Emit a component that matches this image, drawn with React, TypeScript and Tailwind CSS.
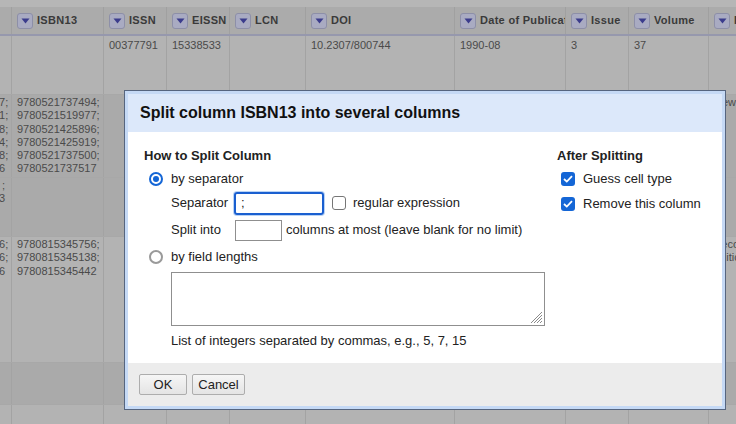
const cols = [73, 92, 63, 63, 76, 149, 111, 63, 80, 120];
const headers = ["ISBN", "ISBN13", "ISSN", "EISSN", "LCN", "DOI", "Date of Publication", "Issue", "Volume", "Publisher"];

interface Row {
  h: number;
  dark: boolean;
  pt: number;
  cells: string[][];
}

const rows: Row[] = [
  { h: 59, dark: false, pt: 3, cells: [[], [], ["00377791"], ["15338533"], [], ["10.2307/800744"], ["1990-08"], ["3"], ["37"], []] },
  {
    h: 83,
    dark: true,
    pt: 1,
    cells: [
      ["0521737497;", "0521519971;", "0521425898;", "0521425914;", "0521737508;", "0521737516"],
      ["9780521737494;", "9780521519977;", "9780521425896;", "9780521425919;", "9780521737500;", "9780521737517"],
      [], [], [], [], [], [], [],
      ["New York"],
    ],
  },
  { h: 59, dark: true, pt: 1, cells: [["052173749 ;", "0521737503"]] },
  {
    h: 126,
    dark: false,
    pt: 1,
    cells: [
      ["0815345756;", "0815345136;", "0815345446"],
      ["9780815345756;", "9780815345138;", "9780815345442"],
      [], [], [], [], [], [], [],
      ["Second", "edition"],
    ],
  },
  { h: 42, dark: true, pt: 1, cells: [] },
  { h: 40, dark: false, pt: 1, cells: [] },
];

function DropBtn() {
  return (
    <span className="flex h-[16px] w-[16px] shrink-0 items-center justify-center rounded-[3px] border border-[#8d8fa8] bg-[#a9abc2]">
      <svg width="9" height="6" viewBox="0 0 9 6">
        <path d="M0.5 0.5 L8.5 0.5 L4.5 5.5 Z" fill="#3b3c8c" />
      </svg>
    </span>
  );
}

function Radio({ checked }: { checked: boolean }) {
  return checked ? (
    <span className="flex h-[14px] w-[14px] items-center justify-center rounded-full border-2 border-[#1466d6] bg-white">
      <span className="h-[6px] w-[6px] rounded-full bg-[#1466d6]" />
    </span>
  ) : (
    <span className="block h-[14px] w-[14px] rounded-full border-2 border-[#9a9a9a] bg-white" />
  );
}

function Check({ checked }: { checked: boolean }) {
  return checked ? (
    <span className="flex h-[14px] w-[14px] items-center justify-center rounded-[3px] bg-[#1466d6]">
      <svg width="10" height="8" viewBox="0 0 10 8">
        <path d="M1 4 L3.8 6.6 L9 1.2" stroke="white" strokeWidth="1.8" fill="none" />
      </svg>
    </span>
  ) : (
    <span className="block h-[14px] w-[14px] rounded-[3px] border-[1.5px] border-[#767676] bg-white" />
  );
}

export default function App() {
  return (
    <div
      className="relative h-[424px] w-[736px] overflow-hidden bg-[#b3b3b3]"
      style={{ fontFamily: '"Liberation Sans", Arial, sans-serif' }}
    >
      {/* grid behind the modal */}
      <div className="ml-[-61px] flex flex-col">
        <div className="h-[7px] bg-[#b6b6b6]" />
        <div className="flex h-[29px] border-b-2 border-[#9698ad] bg-[#ababab]">
          {headers.map((h, i) => (
            <div
              key={i}
              className="flex shrink-0 items-center gap-[4px] overflow-hidden border-r border-[#a0a0a0] pl-[5px] pr-[2px]"
              style={{ width: cols[i] }}
            >
              <DropBtn />
              <span className="whitespace-nowrap text-[11px] font-bold tracking-[0.3px] text-[#3a3a3a]">{h}</span>
            </div>
          ))}
        </div>
        {rows.map((r, ri) => (
          <div
            key={ri}
            className={`flex border-b border-[#a8a8a8] ${r.dark ? "bg-[#aaaaaa]" : "bg-[#b3b3b3]"}`}
            style={{ height: r.h }}
          >
            {cols.map((w, ci) => (
              <div
                key={ci}
                className="shrink-0 overflow-hidden border-r border-[#a3a3a3] px-[5px] text-[11px] leading-[13.3px] text-[#4a4a4a]"
                style={{ width: w, paddingTop: r.pt }}
              >
                {(r.cells[ci] || []).map((t, k) => (
                  <div key={k} className="whitespace-nowrap">
                    {t}
                  </div>
                ))}
              </div>
            ))}
          </div>
        ))}
      </div>

      {/* modal dialog */}
      <div className="absolute left-[124px] top-[90px] flex h-[320px] w-[602px] flex-col border border-[#56657f] bg-[#c5d9f5] p-[3px]">
        <div className="flex h-[38px] items-center bg-[#dce8fa] pl-[12px] text-[16px] font-bold text-[#111]">
          Split column ISBN13 into several columns
        </div>
        <div className="flex flex-1 bg-white pl-[16px] pt-[16px] text-[13px] text-[#222]">
          <div className="flex w-[413px] flex-col">
            <div className="h-[16px] font-bold leading-[16px]">How to Split Column</div>
            <div className="mt-[7px] flex h-[16px] items-center gap-[8px] pl-[5px]">
              <Radio checked />
              <span>by separator</span>
            </div>
            <div className="mt-[4px] flex h-[24px] items-center pl-[27px]">
              <span className="w-[63px]">Separator</span>
              <div className="flex h-[23px] w-[90px] items-center rounded-[3px] border-2 border-[#1a5fd0] pl-[5px] shadow-[0_0_0_1px_#b9d3f5]">
                ;
              </div>
              <span className="ml-[8px]">
                <Check checked={false} />
              </span>
              <span className="ml-[7px]">regular expression</span>
            </div>
            <div className="mt-[4px] flex h-[22px] items-center pl-[27px]">
              <span className="w-[64px]">Split into</span>
              <div className="h-[21px] w-[47px] border border-[#8f8f8f]" />
              <span className="ml-[4px]">columns at most (leave blank for no limit)</span>
            </div>
            <div className="mt-[8px] flex h-[16px] items-center gap-[8px] pl-[5px]">
              <Radio checked={false} />
              <span>by field lengths</span>
            </div>
            <div className="relative ml-[27px] mt-[7px] h-[54px] w-[374px] border border-[#8f8f8f]">
              <svg className="absolute bottom-[1px] right-[1px]" width="12" height="12" viewBox="0 0 12 12">
                <path d="M11 3 L3 11 M11 6 L6 11 M11 9 L9 11 M11 0 L0 11" stroke="#8a8a8a" strokeWidth="1" />
              </svg>
            </div>
            <div className="ml-[27px] mt-[7px] leading-[16px]">List of integers separated by commas, e.g., 5, 7, 15</div>
          </div>
          <div className="flex flex-col">
            <div className="h-[16px] font-bold leading-[16px]">After Splitting</div>
            <div className="mt-[7px] flex h-[16px] items-center gap-[8px] pl-[4px]">
              <Check checked />
              <span>Guess cell type</span>
            </div>
            <div className="mt-[9px] flex h-[16px] items-center gap-[8px] pl-[4px]">
              <Check checked />
              <span>Remove this column</span>
            </div>
          </div>
        </div>
        <div className="flex h-[43px] gap-[5px] bg-[#ececec] pl-[11px] pt-[11px]">
          <button className="h-[21px] w-[48px] rounded-[2px] border border-[#adadad] bg-gradient-to-b from-[#f6f6f6] to-[#e4e4e4] text-[13px] text-[#222]">
            OK
          </button>
          <button className="h-[21px] w-[53px] rounded-[2px] border border-[#adadad] bg-gradient-to-b from-[#f6f6f6] to-[#e4e4e4] text-[13px] text-[#222]">
            Cancel
          </button>
        </div>
      </div>
    </div>
  );
}
